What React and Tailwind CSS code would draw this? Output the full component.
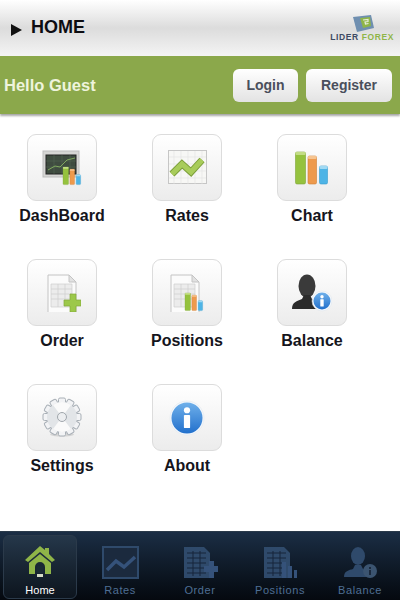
import { useId } from "react";

const InfoBadge = ({ cx, cy, r }) => {
  const id = useId();
  return (
    <g>
      <defs>
        <linearGradient id={id} x1="0" y1="0" x2="0" y2="1">
          <stop offset="0" stopColor="#6fb0ea" />
          <stop offset="1" stopColor="#2270cc" />
        </linearGradient>
      </defs>
      <circle cx={cx} cy={cy} r={r + 1.5} fill="#f4f8fc" stroke="#dfe5ea" strokeWidth=".5" />
      <circle cx={cx} cy={cy} r={r} fill={`url(#${id})`} />
      <circle cx={cx} cy={cy - r * 0.5} r={r * 0.2} fill="#fff" />
      <rect x={cx - r * 0.2} y={cy - r * 0.2} width={r * 0.4} height={r * 0.85} rx={r * 0.06} fill="#fff" />
    </g>
  );
};

const Bars = ({ x, y, scale = 1 }) => (
  <g transform={`translate(${x} ${y}) scale(${scale})`}>
    <rect x="0" y="0" width="10" height="32" rx="1.5" fill="#95c23e" stroke="#7ea536" strokeWidth=".6" />
    <rect x="0" y="0" width="10" height="3" rx="1" fill="#c3dd85" />
    <rect x="12.5" y="4" width="8.5" height="28" rx="1.5" fill="#ee9a4d" stroke="#cf7f36" strokeWidth=".6" />
    <rect x="12.5" y="4" width="8.5" height="3" rx="1" fill="#f6c490" />
    <rect x="24" y="14" width="8" height="18" rx="1.5" fill="#4eb4e6" stroke="#379ccc" strokeWidth=".6" />
    <rect x="24" y="14" width="8" height="3" rx="1" fill="#a0d9f3" />
  </g>
);

const Sheet = () => (
  <g>
    <path d="M1 40h30v2H1z" fill="#c9c9c9" />
    <path d="M4 1h21l7 7v33H4z" fill="#fbfbfb" stroke="#c4c4c4" />
    <path d="M25 1v7h7z" fill="#e2e2e2" stroke="#c4c4c4" />
    <path d="M7 10h21v23H7z" fill="#ececec" stroke="#cfcfcf" strokeWidth=".7" />
    <path d="M7 15h21M7 20h21M7 25h21M14 10v23M21 10v23" stroke="#cfcfcf" strokeWidth=".7" />
  </g>
);

const DashIcon = () => (
  <svg width="40" height="36" viewBox="0 0 40 36">
    <rect x="1" y="1" width="36" height="26" fill="#d6d6d4" stroke="#bdbdbd" />
    <rect x="4" y="5" width="30" height="19" fill="#3f4c40" stroke="#222" />
    <path d="M4 11h30M4 17h30M12 5v19M20 5v19M28 5v19" stroke="#556955" strokeWidth=".5" />
    <path d="M6 20l7-4 5 1 7-7 8-2" stroke="#7fa85e" strokeWidth="1" fill="none" />
    <Bars x="21" y="17" scale={0.55} />
  </svg>
);

const RatesIcon = () => (
  <svg width="39" height="35" viewBox="0 0 39 35">
    <rect x=".5" y=".5" width="38" height="33" fill="#f7f7f5" stroke="#c6c6c6" />
    <path d="M6 1v33M13 1v33M20 1v33M27 1v33M34 1v33M1 7h37M1 14h37M1 21h37M1 28h37" stroke="#e3e3e0" strokeWidth=".6" />
    <path d="M4 24l10-10 9 8 11-12" stroke="#7c9f3a" strokeWidth="7" fill="none" />
    <path d="M4 24l10-10 9 8 11-12" stroke="#a8cc5a" strokeWidth="5" fill="none" />
  </svg>
);

const ChartIcon = () => (
  <svg width="34" height="34" viewBox="0 0 34 34">
    <Bars x="0.5" y="1" />
  </svg>
);

const OrderIcon = () => (
  <svg width="37" height="38" viewBox="0 0 37 38">
    <Sheet />
    <path d="M20 26h6v-6h6v6h5v6h-5v6h-6v-6h-6z" fill="#9cc84a" stroke="#84ab3a" strokeWidth=".7" />
  </svg>
);

const PositionsIcon = () => (
  <svg width="40" height="38" viewBox="0 0 40 38">
    <Sheet />
    <Bars x="18" y="19" scale={0.55} />
  </svg>
);

const BalanceIcon = () => (
  <svg width="40" height="38" viewBox="0 0 40 38">
    <ellipse cx="15" cy="12" rx="8.5" ry="11.5" fill="#3a3a3a" />
    <path d="M0 35c0-7 5-8 10-10l2-4h6l2 4c4 2 8 3 9 10z" fill="#2b2b2b" />
    <InfoBadge cx={30} cy={27} r={8.5} />
  </svg>
);

const SettingsIcon = () => {
  const teeth = Array.from({ length: 12 }, (_, i) => i * 30);
  return (
    <svg width="40" height="42" viewBox="0 0 40 42">
      <ellipse cx="20" cy="37.5" rx="12" ry="2" fill="#d4d4d4" />
      {teeth.map((a) => (
        <rect key={a} x="16.5" y="1" width="7" height="7" rx="1.5" fill="#f2f3f5" stroke="#a9b0b7" transform={`rotate(${a} 20 20)`} />
      ))}
      <circle cx="20" cy="20" r="15" fill="#e2e5e8" />
      <path d="M20 20L11 8A15 15 0 0 1 29 8zM20 20L11 32A15 15 0 0 0 29 32z" fill="#fafafa" />
      <circle cx="20" cy="20" r="4.5" fill="#eceef0" stroke="#a0a6ac" />
    </svg>
  );
};

const AboutIcon = () => (
  <svg width="36" height="36" viewBox="0 0 36 36">
    <InfoBadge cx={18} cy={18} r={15.5} />
  </svg>
);

const menu = [
  ["DashBoard", DashIcon],
  ["Rates", RatesIcon],
  ["Chart", ChartIcon],
  ["Order", OrderIcon],
  ["Positions", PositionsIcon],
  ["Balance", BalanceIcon],
  ["Settings", SettingsIcon],
  ["About", AboutIcon],
];

const TabHome = () => (
  <svg width="32" height="34" viewBox="0 0 32 34">
    <path d="M16 1L1 15l3 2L16 7l12 10 3-2-6-6V3h-4v2z" fill="#8fb548" />
    <path d="M5 18L16 9l11 9v11H21v-7a5 5 0 0 0-10 0v7H5z" fill="#8fb548" />
    <rect x="12.5" y="21" width="7" height="7" rx="1" fill="#1a2a33" />
    <rect x="13" y="29" width="6" height="3" fill="#d5dcc5" />
  </svg>
);

const TabRates = () => (
  <svg width="37" height="33" viewBox="0 0 37 33">
    <rect x="1" y="1" width="35" height="31" fill="#1b2a3e" stroke="#2f4a6b" strokeWidth="2" />
    <path d="M5 24l9-9 8 6 11-10" stroke="#35527a" strokeWidth="3.5" fill="none" />
  </svg>
);

const TabSheet = ({ children }) => (
  <svg width="36" height="33" viewBox="0 0 36 33">
    <path d="M2 1h20l6 6v25H2z" fill="#2f4a6b" />
    <path d="M5 7h19M5 12h19M5 17h19M5 22h19M5 27h19M11 5v25M18 5v25" stroke="#16243a" strokeWidth="1" />
    {children}
  </svg>
);

const TabBalance = () => (
  <svg width="36" height="33" viewBox="0 0 36 33">
    <ellipse cx="16" cy="10" rx="7" ry="9" fill="#2f4a6b" />
    <path d="M2 31c0-6 5-7 9-8l2-4h6l2 4c3 1 6 2 7 8z" fill="#2f4a6b" />
    <circle cx="28" cy="25" r="7" fill="#3b5470" />
    <rect x="27" y="24" width="2" height="5" fill="#1b2a3e" />
    <rect x="27" y="21" width="2" height="2" fill="#1b2a3e" />
  </svg>
);

const tabs = [
  ["Home", <TabHome />, true],
  ["Rates", <TabRates />, false],
  ["Order", <TabSheet><path d="M22 20h5v-5h5v5h4v6h-4v6h-5v-6h-5z" fill="#35527a" /></TabSheet>, false],
  ["Positions", <TabSheet><path d="M20 32V16h4v16zM26 32V20h4v12zM32 32v-8h3v8z" fill="#35527a" /></TabSheet>, false],
  ["Balance", <TabBalance />, false],
];

export default function App() {
  return (
    <div className="flex h-[600px] w-[400px] flex-col overflow-hidden bg-white font-['Liberation_Sans',Arial,sans-serif]">
      <div className="flex h-14 shrink-0 items-center justify-between bg-gradient-to-b from-white via-[#dcdcdc] to-[#f4f4f4] pl-[11px] pr-[6px]">
        <div className="flex items-center gap-[9px]">
          <svg width="11" height="12" viewBox="0 0 11 12" className="mt-[3px]">
            <path d="M0 0l11 6-11 6z" fill="#111" />
          </svg>
          <span className="mb-[2px] text-[18px] font-bold leading-none text-[#0d0d12]">HOME</span>
        </div>
        <div className="flex flex-col items-center">
          <svg width="24" height="18" viewBox="0 0 24 18" className="ml-[2px]">
            <path d="M2 2l18-2 3 13-17 4z" fill="#6f8fb0" />
            <path d="M9 3l10-1 1 9-8 2z" fill="#8fb548" />
            <path d="M12 5l5-.5v2l-3 .5 .5 2 3-.5" stroke="#e6eddc" strokeWidth="1.2" fill="none" />
          </svg>
          <div className="text-[8.5px] font-bold leading-[9px] tracking-[.6px]">
            <span className="text-[#3d4a63]">LIDER</span>
            <span className="text-[#8fb548]"> FOREX</span>
          </div>
        </div>
      </div>

      <div className="flex h-[58px] shrink-0 items-center justify-between bg-[#8ba84b] pl-1 pr-2 shadow-[0_2px_2px_rgba(0,0,0,0.35)]">
        <span className="text-[16.5px] font-bold text-[#eef4dc]">Hello Guest</span>
        <div className="flex gap-2">
          <button className="h-[33px] w-[65px] rounded-md bg-gradient-to-b from-white to-[#e3e3e3] text-[14px] font-bold text-[#4a4f5c]">Login</button>
          <button className="h-[33px] w-[86px] rounded-md bg-gradient-to-b from-white to-[#e3e3e3] text-[14px] font-bold text-[#4a4f5c]">Register</button>
        </div>
      </div>

      <div className="grid flex-1 grid-cols-[repeat(3,124px)] content-start gap-x-px pt-5">
        {menu.map(([label, Icon]) => (
          <div key={label} className="flex h-[125px] flex-col items-center">
            <div className="flex h-[67px] w-[70px] items-center justify-center rounded-[9px] border border-[#dcdcdc] bg-gradient-to-b from-white to-[#ececec]">
              <Icon />
            </div>
            <span className="mt-[6px] text-[16px] font-bold leading-[18px] text-[#15151c]">{label}</span>
          </div>
        ))}
      </div>

      <div className="flex h-[69px] shrink-0 border-t border-[#2a3a4a] bg-gradient-to-b from-[#1b2e45] to-[#05090f]">
        {tabs.map(([label, icon, active]) => (
          <div key={label} className="flex w-20 justify-center pt-[3px]">
            <div className={active
              ? "flex h-[64px] w-[74px] flex-col items-center rounded-md border border-[#2b3a4a] bg-gradient-to-b from-[#25374a] to-[#0d151e] pt-[8px]"
              : "flex h-[64px] w-[74px] flex-col items-center pt-[9px]"}>
              <div className="flex h-[36px] items-center">{icon}</div>
              <span className={active ? "mt-[3px] text-[11px] leading-[14px] text-white" : "mt-[3px] whitespace-nowrap text-[11px] leading-[14px] tracking-[.6px] text-[#4f6f94]"}>{label}</span>
            </div>
          </div>
        ))}
      </div>
    </div>
  );
}
